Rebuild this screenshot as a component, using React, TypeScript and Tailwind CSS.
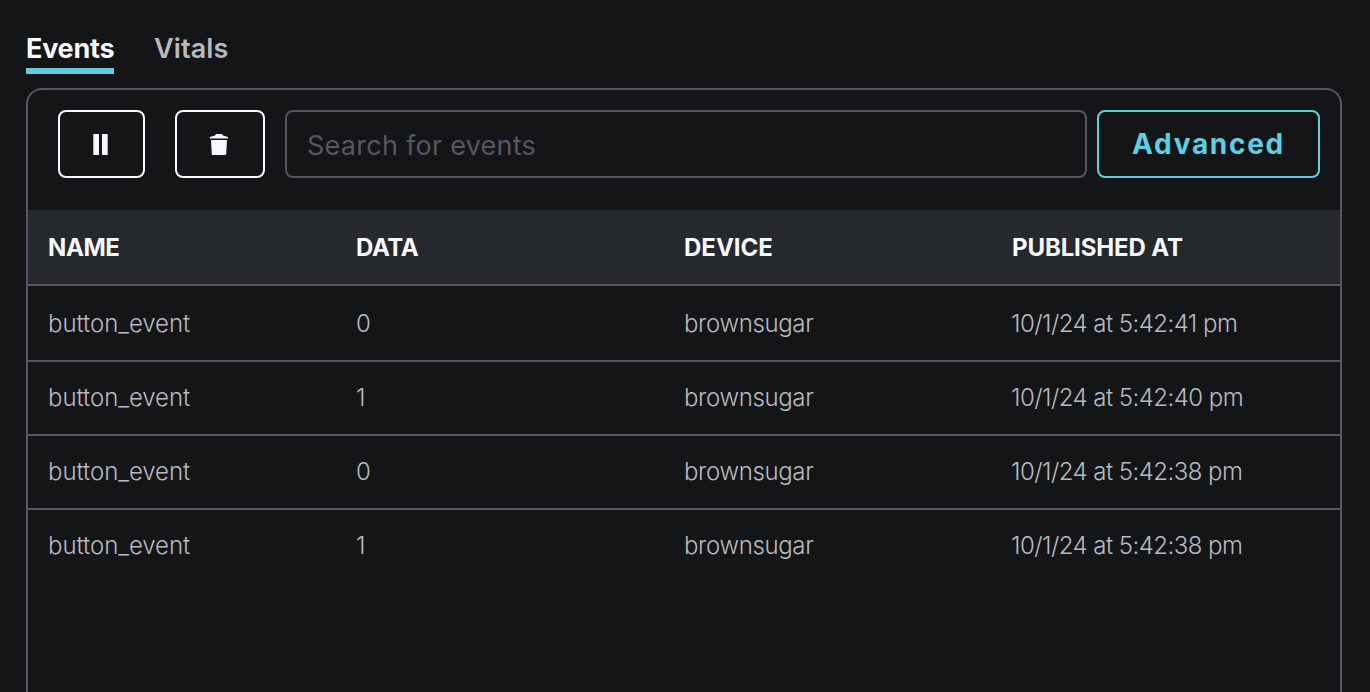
import React from "react";

const rows = [
  { data: "0", time: "10/1/24 at 5:42:41 pm" },
  { data: "1", time: "10/1/24 at 5:42:40 pm" },
  { data: "0", time: "10/1/24 at 5:42:38 pm" },
  { data: "1", time: "10/1/24 at 5:42:38 pm" },
];

export default function App() {
  return (
    <div className="flex h-[692px] w-[1370px] flex-col overflow-hidden bg-[#141517] pr-7 pl-[26px] font-['Inter',sans-serif] text-[#f7f7fc]">
      <nav className="flex h-[88px] shrink-0 pt-[30px]">
        <span className="mr-10 h-11 w-[88px] border-b-[6px] border-[#5ecfe3] text-[27px] leading-[37px] font-bold tracking-[-0.25px] whitespace-nowrap">Events</span>
        <span className="h-11 text-[27px] leading-[37px] font-semibold tracking-[0.1px] text-[#b9b9c0]">Vitals</span>
      </nav>
      <main className="flex grow flex-col rounded-t-2xl border-2 border-b-0 border-[#575764]">
        <div className="flex h-[120px] shrink-0 pt-5 pl-[30px]">
          <button aria-label="Pause" className="mr-[30px] flex h-[68px] w-[87px] items-center justify-center rounded-lg border-2 border-[#f7f7fc] pt-px pr-0.5">
            <svg width="15" height="21" viewBox="0 0 15 21" fill="currentColor"><path d="M.3 0H6v21H.3zM9 0h5.7v21H9z" /></svg>
          </button>
          <button aria-label="Clear" className="mr-5 flex h-[68px] w-[90px] items-center justify-center rounded-lg border-2 border-[#f7f7fc] pt-px pr-0.5">
            <svg width="18" height="21" viewBox="0 0 18 21" fill="currentColor"><path d="M0 4.6V3.1L5 1.5 6 0h6l1 1.5 5 1.6v1.5zM1 6h16l-.8 14.2q-.1.8-.9.8H2.7q-.8 0-.9-.8z" /></svg>
          </button>
          <div className="mr-2.5 h-[68px] w-[802px] rounded-lg border-2 border-[#575764] pl-5 text-[27px] leading-[67px] tracking-[0.26px] text-[#575764]">Search for events</div>
          <button className="h-[68px] w-[223px] rounded-lg border-2 border-[#5ecfe3] pb-px text-[28px] font-bold tracking-[1.7px] text-[#5ecfe3]">Advanced</button>
        </div>
        <div className="grid h-[76px] shrink-0 grid-cols-[308px_328px_328px_1fr] border-b-2 border-[#575764] bg-[#25282d] pl-5 text-2xl leading-[76px] font-bold tracking-[-0.12px]">
          <span className="tracking-[-0.4px]">NAME</span>
          <span className="tracking-[-0.4px]">DATA</span>
          <span className="tracking-normal">DEVICE</span>
          <span>PUBLISHED AT</span>
        </div>
        {rows.map((r, i) => (
          <div key={i} className="grid h-[74px] shrink-0 grid-cols-[308px_328px_328px_1fr] border-b-2 border-[#575764] pl-5 text-2xl leading-[72px] font-light text-[#b9bac0] last:border-0 nth-3:h-[76px] nth-3:leading-[76px]">
            <span className="tracking-[-0.05px]">button_event</span>
            <span>{r.data}</span>
            <span className="tracking-[-0.35px]">brownsugar</span>
            <span className="ml-[-1px] tracking-[-0.54px]">{r.time}</span>
          </div>
        ))}
      </main>
    </div>
  );
}
